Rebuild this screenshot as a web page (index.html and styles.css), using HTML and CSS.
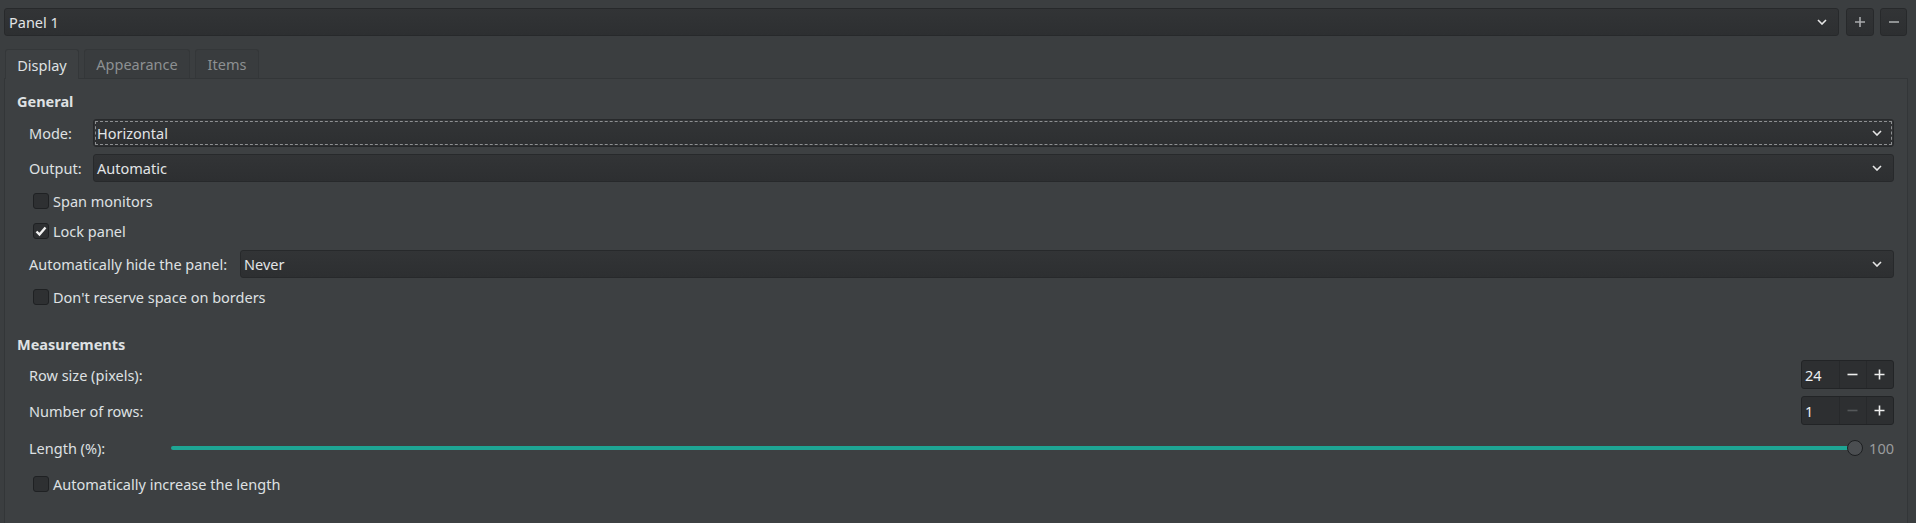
FILE: index.html
```html
<!DOCTYPE html>
<html>
<head>
<meta charset="utf-8">
<link rel="stylesheet" href="styles.css">
</head>
<body>
<div class="topbar">
  <div class="combo top-combo"><span>Panel 1</span><svg class="chev" width="10" height="6" viewBox="0 0 10 6"><path d="M1 1 L5 5 L9 1" fill="none" stroke="#e6e6e6" stroke-width="1.6"/></svg></div>
  <button class="tbtn"><svg width="12" height="12" viewBox="0 0 12 12"><path d="M6 1 V11 M1 6 H11" stroke="#a9abad" stroke-width="1.6"/></svg></button>
  <button class="tbtn"><svg width="12" height="12" viewBox="0 0 12 12"><path d="M1 6 H11" stroke="#a9abad" stroke-width="1.6"/></svg></button>
</div>
<div class="tabs">
  <div class="tab active">Display</div>
  <div class="tab">Appearance</div>
  <div class="tab">Items</div>
</div>
<div class="pane">
  <div class="section-title first">General</div>
  <div class="row r-mode">
    <label class="lbl w-form">Mode:</label>
    <div class="combo grow focus"><span>Horizontal</span><svg class="chev" width="10" height="6" viewBox="0 0 10 6"><path d="M1 1 L5 5 L9 1" fill="none" stroke="#e6e6e6" stroke-width="1.6"/></svg></div>
  </div>
  <div class="row r-out">
    <label class="lbl w-form">Output:</label>
    <div class="combo grow"><span>Automatic</span><svg class="chev" width="10" height="6" viewBox="0 0 10 6"><path d="M1 1 L5 5 L9 1" fill="none" stroke="#e6e6e6" stroke-width="1.6"/></svg></div>
  </div>
  <div class="row check r-span"><span class="cb"></span><span>Span monitors</span></div>
  <div class="row check r-lock"><span class="cb"><svg width="12" height="11" viewBox="0 0 12 11"><path d="M1.5 5.5 L4.5 8.5 L10.5 1.5" fill="none" stroke="#f2f2f2" stroke-width="2.4"/></svg></span><span>Lock panel</span></div>
  <div class="row r-hide">
    <label class="lbl w-hide">Automatically hide the panel:</label>
    <div class="combo grow"><span>Never</span><svg class="chev" width="10" height="6" viewBox="0 0 10 6"><path d="M1 1 L5 5 L9 1" fill="none" stroke="#e6e6e6" stroke-width="1.6"/></svg></div>
  </div>
  <div class="row check r-res"><span class="cb"></span><span>Don't reserve space on borders</span></div>

  <div class="section-title r-meas">Measurements</div>
  <div class="row r-rowsize">
    <label class="lbl grow">Row size (pixels):</label>
    <div class="spin"><span class="val">24</span><span class="sbtn"><svg width="11" height="11" viewBox="0 0 11 11"><path d="M0.5 5.5 H10.5" stroke="#eeeeee" stroke-width="1.6"/></svg></span><span class="sbtn"><svg width="11" height="11" viewBox="0 0 11 11"><path d="M5.5 0.5 V10.5 M0.5 5.5 H10.5" stroke="#eeeeee" stroke-width="1.6"/></svg></span></div>
  </div>
  <div class="row r-rows">
    <label class="lbl grow">Number of rows:</label>
    <div class="spin"><span class="val">1</span><span class="sbtn"><svg width="11" height="11" viewBox="0 0 11 11"><path d="M0.5 5.5 H10.5" stroke="#55585a" stroke-width="1.6"/></svg></span><span class="sbtn"><svg width="11" height="11" viewBox="0 0 11 11"><path d="M5.5 0.5 V10.5 M0.5 5.5 H10.5" stroke="#eeeeee" stroke-width="1.6"/></svg></span></div>
  </div>
  <div class="row r-len">
    <label class="lbl w-len">Length (%):</label>
    <div class="slider"><div class="track"></div><div class="knob"></div></div>
    <span class="sval">100</span>
  </div>
  <div class="row check r-inc"><span class="cb"></span><span>Automatically increase the length</span></div>
</div>
</body>
</html>
```

FILE: styles.css
```css
html, body {
  margin: 0;
  padding: 0;
  background: #3b3e40;
  color: #dfe1e3;
  font-family: "Noto Sans", "Open Sans", sans-serif;
  font-size: 14.5px;
  overflow: hidden;
}
.topbar {
  display: flex;
  align-items: center;
  padding: 8px 9px 0 4px;
  height: 28px;
}
.combo {
  display: flex;
  align-items: center;
  justify-content: space-between;
  height: 28px;
  box-sizing: border-box;
  padding: 0 8px 0 6px;
  background: linear-gradient(#323436, #2d2f31);
  border: 1px solid #27292b;
  border-radius: 3px;
  color: #e2e4e6;
}
.top-combo {
  flex: 1;
  padding-left: 4px;
}
.chev { margin-right: 3px; }
.tbtn {
  width: 28px;
  height: 28px;
  margin-left: 6px;
  padding: 0;
  display: flex;
  align-items: center;
  justify-content: center;
  background: linear-gradient(#323436, #2d2f31);
  border: 1px solid #27292b;
  border-radius: 3px;
}
.tbtn + .tbtn { width: 27px; }
.topbar .tbtn:first-of-type { margin-left: 7px; }
.tabs {
  display: flex;
  gap: 5px;
  margin-top: 13px;
  padding-left: 5px;
  height: 29px;
  position: relative;
  z-index: 1;
}
.tab {
  height: 29px;
  box-sizing: border-box;
  display: flex;
  align-items: center;
  justify-content: center;
  border: 1px solid #343739;
  border-bottom: none;
  border-radius: 3px 3px 0 0;
  color: #8d9092;
  background: #393c3e;
}
.tab.active {
  color: #dfe1e3;
  background: #3d4042;
  height: 30px;
  width: 74px;
}
.tab:nth-child(2) { width: 106px; }
.tab:nth-child(3) { width: 64px; }
.pane {
  margin: 0 8px 0 4px;
  border: 1px solid #333638;
  border-bottom: none;
  background: #3d4042;
  height: 445px;
  box-sizing: border-box;
  padding: 0 13px 0 0;
  display: flex;
  flex-direction: column;
}
.section-title {
  font-weight: bold;
  height: 20px;
  line-height: 20px;
  padding-left: 12px;
}
.section-title.first { margin-top: 12px; }
.row {
  display: flex;
  align-items: center;
  padding-left: 24px;
}
.lbl { white-space: nowrap; }
.w-form { width: 64px; flex: none; }
.w-hide { width: 211px; flex: none; }
.w-len { width: 142px; flex: none; }
.grow { flex: 1; }
.combo.grow { padding-left: 3px; }
.focus {
  outline: 1px dashed #8e9092;
  outline-offset: -3px;
}
.r-mode { height: 28px; margin-top: 8px; }
.r-out { height: 28px; margin-top: 7px; }
.r-span { height: 24px; margin-top: 7px; }
.r-lock { height: 24px; margin-top: 6px; }
.r-hide { height: 28px; margin-top: 7px; }
.r-res { height: 24px; margin-top: 7px; }
.r-meas { margin-top: 25px; }
.r-rowsize { height: 29px; margin-top: 6px; }
.r-rows { height: 29px; margin-top: 7px; }
.r-len { height: 24px; margin-top: 11px; }
.r-inc { height: 24px; margin-top: 12px; }
.check { padding-left: 28px; }
.cb {
  width: 16px;
  height: 16px;
  box-sizing: border-box;
  border: 1px solid #1f2123;
  border-radius: 3px;
  background: #2e3032;
  margin-right: 4px;
  display: flex;
  align-items: center;
  justify-content: center;
  flex: none;
}
.spin {
  width: 93px;
  height: 29px;
  box-sizing: border-box;
  display: flex;
  background: #2d2f31;
  border: 1px solid #222426;
  border-radius: 3px;
}
.spin .val {
  width: 38px;
  padding-left: 3px;
  box-sizing: border-box;
  display: flex;
  align-items: center;
  color: #eef0f2;
}
.sbtn {
  width: 27px;
  display: flex;
  align-items: center;
  justify-content: center;
  border-left: 1px solid #27292b;
}
.slider {
  flex: 1;
  position: relative;
  height: 16px;
  display: flex;
  align-items: center;
}
.track {
  flex: 1;
  height: 4px;
  border-radius: 2px;
  background: #1ea594;
  margin-right: 6px;
}
.knob {
  position: absolute;
  right: 0;
  top: 0;
  width: 14px;
  height: 14px;
  border-radius: 50%;
  background: #4b4e51;
  border: 1px solid #1d1f21;
}
.sval {
  width: 31px;
  text-align: right;
  color: #9a9c9e;
  flex: none;
}
```
